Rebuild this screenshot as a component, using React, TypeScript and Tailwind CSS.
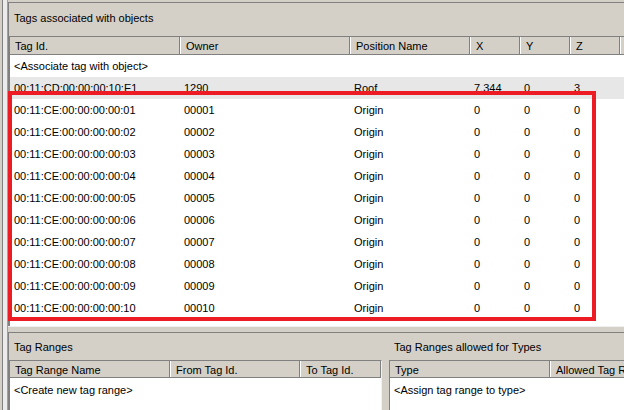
import React from "react";

const rows = Array.from({ length: 10 }, (_, i) => {
  const n = String(i + 1).padStart(2, "0");
  return { id: `00:11:CE:00:00:00:00:${n}`, owner: `000${n}`, pos: "Origin", x: "0", y: "0", z: "0" };
});

const cols = [170, 170, 120, 50, 50, 50];

function HeaderCell({ w, children, first }: { w?: number; children?: React.ReactNode; first?: boolean }) {
  return (
    <div
      className={`h-full shrink-0 flex items-center pt-[2px] border-r border-r-[#808080] ${first ? "pl-[5px]" : "border-l border-l-white pl-[5px]"}`}
      style={w ? { width: w } : { flex: 1 }}
    >
      <span className="whitespace-nowrap">{children}</span>
    </div>
  );
}

function DataRow({ cells, bg }: { cells: string[]; bg?: string }) {
  return (
    <div className={`flex h-[22px] items-center ${bg ?? ""}`}>
      {cells.map((c, i) => (
        <div key={i} className="shrink-0 pl-[4px] whitespace-nowrap" style={{ width: cols[i] }}>
          {c}
        </div>
      ))}
    </div>
  );
}

export default function App() {
  return (
    <div
      className="relative w-[624px] h-[410px] overflow-hidden bg-[#d4d0c8] flex text-[11px] leading-[13px] text-black"
      style={{ fontFamily: '"Liberation Sans", Arial, sans-serif' }}
    >
      {/* left splitter strip */}
      <div className="flex h-full shrink-0">
        <div className="w-[2px] bg-[#d4d0c8]" />
        <div className="w-[1px] bg-[#808080]" />
        <div className="w-[4px] bg-[#ebebeb]" />
        <div className="w-[1px] bg-[#a0a0a0]" />
      </div>

      <div className="flex-1 flex flex-col min-w-0">
        {/* top panel */}
        <div className="mt-[2px] h-[324px] border-t border-l border-[#808080] flex flex-col">
          <div className="h-[33px] pl-[5px] pt-[9px] shrink-0">Tags associated with objects</div>
          <div className="flex-1 border-t border-l border-[#808080] bg-white flex flex-col overflow-hidden">
            <div className="h-[18px] bg-[#d4d0c8] border-b border-[#808080] flex shrink-0">
              <HeaderCell w={170} first>Tag Id.</HeaderCell>
              <HeaderCell w={170}>Owner</HeaderCell>
              <HeaderCell w={120}>Position Name</HeaderCell>
              <HeaderCell w={50}>X</HeaderCell>
              <HeaderCell w={50}>Y</HeaderCell>
              <HeaderCell w={50}>Z</HeaderCell>
              <HeaderCell> </HeaderCell>
            </div>
            <div className="h-[22px] flex items-center pl-[4px] shrink-0">&lt;Associate tag with object&gt;</div>
            <DataRow cells={["00:11:CD:00:00:00:10:E1", "1290", "Roof", "7.344", "0", "3"]} bg="bg-[#e7e7e7]" />
            {rows.map((r) => (
              <DataRow key={r.id} cells={[r.id, r.owner, r.pos, r.x, r.y, r.z]} />
            ))}
          </div>
        </div>

        {/* horizontal splitter */}
        <div className="h-[6px] shrink-0 border-t border-[#f0f0f0]" />

        {/* bottom panels */}
        <div className="flex-1 border-t border-[#808080] flex">
          <div className="w-[374px] shrink-0 border-l border-[#808080] flex flex-col">
            <div className="h-[27px] pl-[5px] pt-[8px] shrink-0">Tag Ranges</div>
            <div className="flex-1 border-t border-l border-[#808080] border-r border-r-[#f0f0f0] bg-white flex flex-col">
              <div className="h-[17px] bg-[#d4d0c8] border-b border-[#808080] flex shrink-0">
                <HeaderCell w={160} first>Tag Range Name</HeaderCell>
                <HeaderCell w={130}>From Tag Id.</HeaderCell>
                <HeaderCell>To Tag Id.</HeaderCell>
              </div>
              <div className="h-[24px] flex items-center pl-[4px]">&lt;Create new tag range&gt;</div>
            </div>
          </div>
          <div className="w-[7px] shrink-0" />
          <div className="flex-1 flex flex-col min-w-0">
            <div className="h-[27px] pl-[5px] pt-[8px] shrink-0 whitespace-nowrap">Tag Ranges allowed for Types</div>
            <div className="flex-1 border-t border-l border-[#808080] bg-white flex flex-col overflow-hidden">
              <div className="h-[17px] bg-[#d4d0c8] border-b border-[#808080] flex shrink-0">
                <HeaderCell w={160} first>Type</HeaderCell>
                <HeaderCell w={120}>Allowed Tag Ranges</HeaderCell>
              </div>
              <div className="h-[24px] flex items-center pl-[4px] whitespace-nowrap">&lt;Assign tag range to type&gt;</div>
            </div>
          </div>
        </div>
      </div>

      {/* red annotation box */}
      <div className="absolute left-[8px] top-[91px] w-[588px] h-[230px] border-4 border-[#ed1c24] pointer-events-none" />
    </div>
  );
}
